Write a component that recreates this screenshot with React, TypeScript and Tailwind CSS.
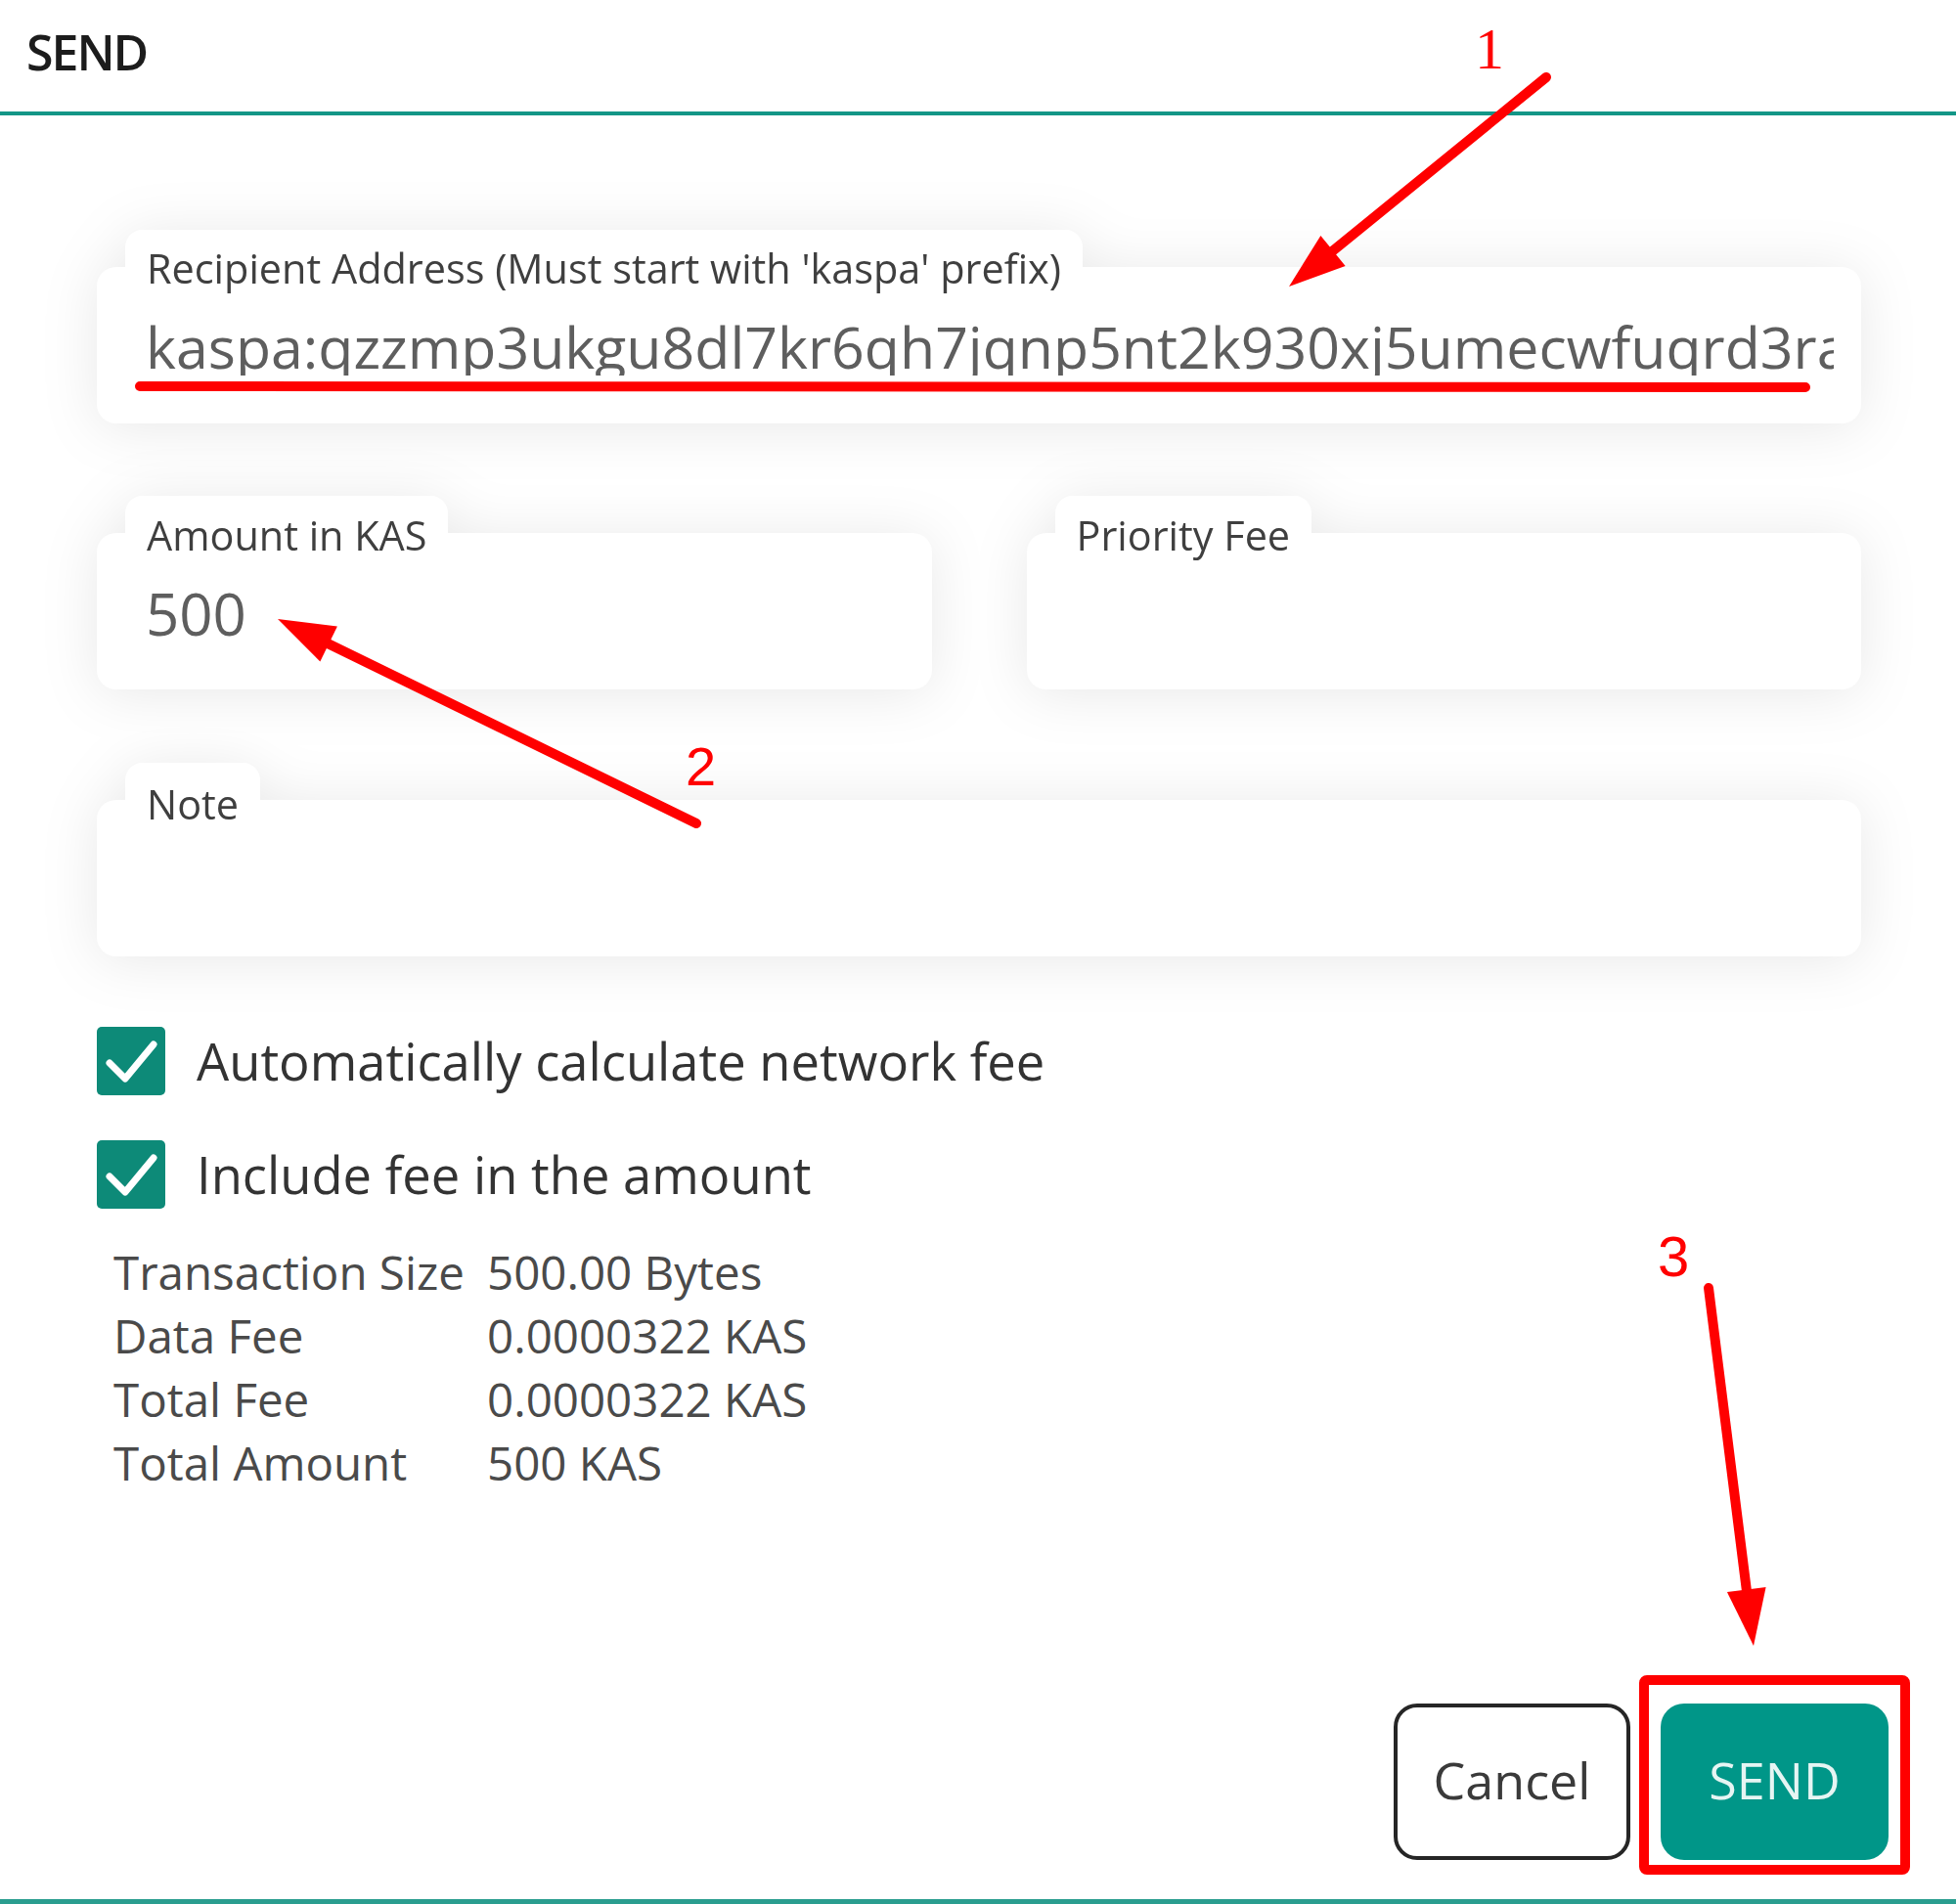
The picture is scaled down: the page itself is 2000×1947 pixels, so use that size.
import React from "react";

const ADDRESS = "kaspa:qzzmp3ukgu8dl7kr6qh7jqnp5nt2k930xj5umecwfuqrd3ra8k2mhkv6hfx4n";

// annotation arrow: shaft + filled head, tip at (x2, y2)
function Arrow({ x1, y1, x2, y2 }: { x1: number; y1: number; x2: number; y2: number }) {
  const dx = x2 - x1;
  const dy = y2 - y1;
  const len = Math.hypot(dx, dy);
  const ux = dx / len;
  const uy = dy / len;
  const hl = 58;
  const hw = 20;
  const bx = x2 - ux * hl;
  const by = y2 - uy * hl;
  const px = -uy;
  const py = ux;
  const pts = `${x2},${y2} ${bx + px * hw},${by + py * hw} ${bx - px * hw},${by - py * hw}`;
  return (
    <g>
      <line x1={x1} y1={y1} x2={bx + ux * 4} y2={by + uy * 4} stroke="#ff0000" strokeWidth={10} strokeLinecap="round" />
      <polygon points={pts} fill="#ff0000" />
    </g>
  );
}

function Field({
  label,
  labelPad,
  children,
  className,
}: {
  label: string;
  labelPad: string;
  children?: React.ReactNode;
  className?: string;
}) {
  return (
    <div className={"flex flex-col [filter:drop-shadow(0_4px_28px_rgba(0,0,0,0.09))] " + (className ?? "")}>
      <div className="ml-[29px] h-[38px] self-start bg-white rounded-t-[18px] px-[22px]">
        <div className={"relative z-10 text-[41.4px] leading-none text-[#3f3f3f] whitespace-nowrap " + labelPad}>{label}</div>
      </div>
      <div className="h-[160px] bg-white rounded-[20px] pl-[50px] pr-[28px] pt-[52px]">{children}</div>
    </div>
  );
}

function Check({ label }: { label: string }) {
  return (
    <div className="flex items-center h-[70px] gap-[32px]">
      <div className="w-[70px] h-[70px] rounded-[5px] bg-[#0d8a78] flex items-center justify-center">
        <svg width="70" height="70" viewBox="0 0 70 70">
          <path d="M13 37 L29 53 L58 18" fill="none" stroke="#ffffff" strokeWidth="7" strokeLinecap="round" strokeLinejoin="round" />
        </svg>
      </div>
      <span className="text-[52.5px] leading-[70px] text-[#333333]">{label}</span>
    </div>
  );
}

export default function App() {
  const rows = [
    ["Transaction Size", "500.00 Bytes"],
    ["Data Fee", "0.0000322 KAS"],
    ["Total Fee", "0.0000322 KAS"],
    ["Total Amount", "500 KAS"],
  ];

  return (
    <div className="relative w-[2000px] h-[1947px] bg-white overflow-hidden flex flex-col font-['Open_Sans',sans-serif]">
      {/* header */}
      <div className="h-[114px] pl-[27px] pt-[28px]">
        <h1 className="text-[50px] leading-none font-semibold tracking-[-2px] text-[#1c1c1c]">SEND</h1>
      </div>
      <div className="h-[4px] bg-[#139687]" />

      {/* form */}
      <div className="pl-[99px] pr-[97px] pt-[117px] flex flex-col">
        <Field label="Recipient Address (Must start with 'kaspa' prefix)" labelPad="pt-[19px]">
          <div className="overflow-hidden whitespace-nowrap text-[59px] leading-none text-[#5e5e5e]">{ADDRESS}</div>
        </Field>

        <div className="mt-[74px] grid grid-cols-2 gap-[97px]">
          <Field label="Amount in KAS" labelPad="pt-[20px]">
            <div className="text-[60px] leading-none text-[#5e5e5e]">500</div>
          </Field>
          <Field label="Priority Fee" labelPad="pt-[20px]" />
        </div>

        <Field label="Note" labelPad="pt-[22px]" className="mt-[75px]" />

        <div className="mt-[72px] flex flex-col gap-[46px]">
          <Check label="Automatically calculate network fee" />
          <Check label="Include fee in the amount" />
        </div>

        <div className="mt-[32px] pl-[17px] grid grid-cols-[382px_auto] text-[47.5px] leading-[65px] text-[#4a4a4a]">
          {rows.map(([k, v]) => (
            <React.Fragment key={k}>
              <div>{k}</div>
              <div>{v}</div>
            </React.Fragment>
          ))}
        </div>
      </div>

      <div className="flex-1" />

      {/* buttons */}
      <div className="flex justify-end gap-[31px] pr-[69px] pb-[40px]">
        <button className="w-[242px] h-[160px] rounded-[24px] border-[4px] border-[#262626] bg-white text-[52px] text-[#3a3a3a] pb-[4px]">
          Cancel
        </button>
        <button className="w-[233px] h-[160px] rounded-[24px] bg-[#009688] text-[52px] text-[#e6f5f3] pb-[4px]">SEND</button>
      </div>
      <div className="h-[5px] bg-[#2a9d8f]" />

      {/* red annotations */}
      <svg className="absolute inset-0 pointer-events-none" width="2000" height="1947" viewBox="0 0 2000 1947">
        <line x1="143" y1="395" x2="1846" y2="396" stroke="#ff0000" strokeWidth="10" strokeLinecap="round" />
        <Arrow x1={1581} y1={79} x2={1318} y2={293} />
        <Arrow x1={712} y1={842} x2={284} y2={633} />
        <Arrow x1={1747} y1={1317} x2={1793} y2={1683} />
        <rect x="1681" y="1718" width="267" height="194" rx="3" fill="none" stroke="#ff0000" strokeWidth="10" />
        <text x="1508" y="70" fill="#ff0000" fontSize="60" fontFamily="'Liberation Serif', serif">1</text>
        <text x="701" y="803" fill="#ff0000" fontSize="56" fontFamily="'Liberation Sans', sans-serif">2</text>
        <text x="1695" y="1305" fill="#ff0000" fontSize="58" fontFamily="'Liberation Sans', sans-serif">3</text>
      </svg>
    </div>
  );
}
